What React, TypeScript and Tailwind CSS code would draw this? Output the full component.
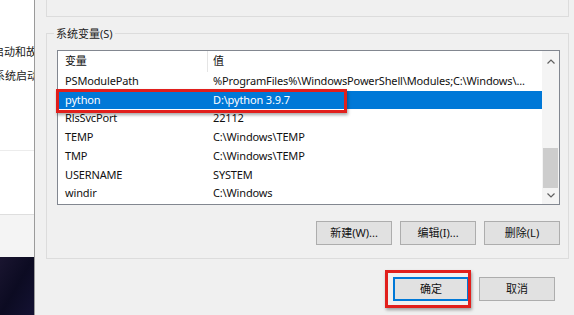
import React from "react";

const ROWS = [
  { name: "PSModulePath", value: "%ProgramFiles%\\WindowsPowerShell\\Modules;C:\\Windows\\..." },
  { name: "python", value: "D:\\python 3.9.7", selected: true },
  { name: "RlsSvcPort", value: "22112" },
  { name: "TEMP", value: "C:\\Windows\\TEMP" },
  { name: "TMP", value: "C:\\Windows\\TEMP" },
  { name: "USERNAME", value: "SYSTEM" },
  { name: "windir", value: "C:\\Windows" },
];

const font = { fontFamily: '"Noto Sans", "Noto Sans CJK SC", sans-serif' };

function Btn({ label, focused }: { label: string; focused?: boolean }) {
  return (
    <div
      className={
        "w-[76px] h-[24px] shrink-0 flex items-center justify-center text-[11px] text-[#111] bg-[#e1e1e1] " +
        (focused ? "border-2 border-[#0078d7]" : "border border-[#adadad]")
      }
    >
      {label}
    </div>
  );
}

export default function App() {
  return (
    <div className="relative w-[574px] h-[315px] flex overflow-hidden bg-[#f0f0f0]" style={font}>
      {/* background window on the left */}
      <div className="w-[35px] shrink-0 flex flex-col bg-white border-r border-[#9a9a9a] overflow-hidden">
        <div className="h-[151px] border-b border-[#ececec] text-[11px] text-[#222] whitespace-nowrap">
          <div className="ml-[-7px] mt-[43px] leading-[18px]">启动和故障恢复</div>
          <div className="ml-[-6px] mt-[6px] leading-[18px]">系统启动</div>
        </div>
        <div className="h-[64px] border-b border-[#dedede] bg-white" />
        <div className="h-[42px] bg-[#f4f4f4]" />
        <div className="flex-1 bg-gradient-to-br from-[#1a1530] via-[#0c0b22] to-[#141233]" />
      </div>

      {/* dialog */}
      <div className="flex-1 min-w-0 pl-[11px] pr-[5px]">
        <div className="h-[17px] border-x border-b border-[#dcdcdc]" />

        <div className="relative mt-[16px] h-[226px] border border-[#dcdcdc] pl-[10px] pr-[8px] pt-[16px]">
          <div className="absolute left-[7px] top-[-9px] px-[2px] bg-[#f0f0f0] text-[11px] text-[#222] leading-[18px]">
            系统变量(S)
          </div>

          {/* list */}
          <div className="h-[155px] border border-[#828790] bg-white flex text-[11px] text-[#111] tracking-[-0.15px]">
            <div className="flex-1 min-w-0 overflow-hidden flex flex-col">
              <div className="h-[21px] shrink-0 flex items-center">
                <div className="w-[150px] shrink-0 pl-[7px] border-r border-[#e5e5e5] h-full flex items-center">变量</div>
                <div className="pl-[5px]">值</div>
              </div>
              {ROWS.map((r) => (
                <div
                  key={r.name}
                  className={
                    "h-[18.7px] shrink-0 flex items-center whitespace-nowrap " +
                    (r.selected ? "bg-[#0078d7] text-white" : "")
                  }
                >
                  <div className="w-[150px] shrink-0 pl-[7px]">{r.name}</div>
                  <div className="pl-[5px]">{r.value}</div>
                </div>
              ))}
            </div>

            {/* scrollbar */}
            <div className="w-[17px] shrink-0 bg-[#f4f4f4] flex flex-col items-center">
              <div className="h-[19px] flex items-center justify-center pt-[2px]">
                <svg width="8" height="5" viewBox="0 0 8 5">
                  <path d="M0.5 4.5 L4 1 L7.5 4.5" fill="none" stroke="#606060" strokeWidth="1.2" />
                </svg>
              </div>
              <div className="flex-1 w-full px-[1px] flex flex-col">
                <div className="h-[78px]" />
                <div className="h-[40px] bg-[#cdcdcd]" />
              </div>
              <div className="h-[17px] flex items-center justify-center">
                <svg width="8" height="5" viewBox="0 0 8 5">
                  <path d="M0.5 0.5 L4 4 L7.5 0.5" fill="none" stroke="#606060" strokeWidth="1.2" />
                </svg>
              </div>
            </div>
          </div>

          <div className="mt-[16px] flex justify-end gap-[8px]">
            <Btn label="新建(W)..." />
            <Btn label="编辑(I)..." />
            <Btn label="删除(L)" />
          </div>
        </div>

        <div className="mt-[18px] flex justify-end gap-[10px] pr-[14px]">
          <Btn label="确定" focused />
          <Btn label="取消" />
        </div>
      </div>

      {/* red highlight annotations */}
      <div className="absolute left-[56px] top-[89px] w-[291px] h-[24px] border-[3px] border-[#e11f1c] shadow-[1px_2px_3px_rgba(0,0,0,0.35)]" />
      <div className="absolute left-[385px] top-[270px] w-[86px] h-[38px] border-[3px] border-[#e11f1c] shadow-[1px_2px_3px_rgba(0,0,0,0.35)]" />
    </div>
  );
}
